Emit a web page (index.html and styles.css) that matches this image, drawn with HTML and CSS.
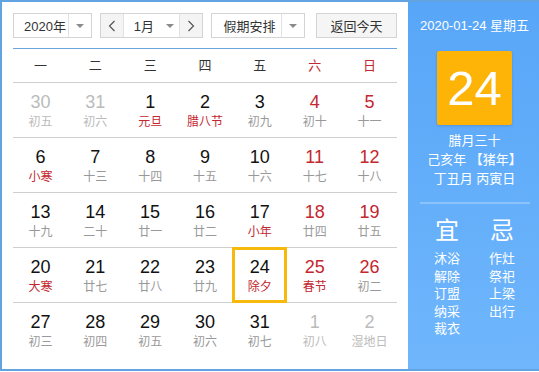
FILE: index.html
```html
<!DOCTYPE html>
<html lang="zh-CN">
<head>
  <meta charset="UTF-8">
  <title>万年历</title>
  <link rel="stylesheet" href="styles.css">
</head>
<body>
  <div class="calendar">
    <div class="main">
      <div class="toolbar">
        <div class="select year-select">
          <span class="select-text">2020年</span>
          <span class="select-arrow"><i class="caret"></i></span>
        </div>
        <div class="month-group">
          <span class="nav-btn">
            <svg width="8" height="12" viewBox="0 0 8 12"><polyline points="6.5,1 1.5,6 6.5,11" fill="none" stroke="#555" stroke-width="1.2"/></svg>
          </span>
          <span class="month-text">1月</span>
          <span class="month-arrow"><i class="caret"></i></span>
          <span class="nav-btn">
            <svg width="8" height="12" viewBox="0 0 8 12"><polyline points="1.5,1 6.5,6 1.5,11" fill="none" stroke="#555" stroke-width="1.2"/></svg>
          </span>
        </div>
        <div class="select holiday-select">
          <span class="select-text">假期安排</span>
          <span class="select-arrow"><i class="caret"></i></span>
        </div>
        <button class="today-btn">返回今天</button>
      </div>

      <div class="weekdays">
        <span>一</span><span>二</span><span>三</span><span>四</span><span>五</span>
        <span class="weekend">六</span><span class="weekend">日</span>
      </div>

      <div class="days">
        <div class="week">
          <div class="day other"><b>30</b><em>初五</em></div>
          <div class="day other"><b>31</b><em>初六</em></div>
          <div class="day"><b>1</b><em class="fest">元旦</em></div>
          <div class="day"><b>2</b><em class="fest">腊八节</em></div>
          <div class="day"><b>3</b><em>初九</em></div>
          <div class="day weekend"><b>4</b><em>初十</em></div>
          <div class="day weekend"><b>5</b><em>十一</em></div>
        </div>
        <div class="week">
          <div class="day"><b>6</b><em class="fest">小寒</em></div>
          <div class="day"><b>7</b><em>十三</em></div>
          <div class="day"><b>8</b><em>十四</em></div>
          <div class="day"><b>9</b><em>十五</em></div>
          <div class="day"><b>10</b><em>十六</em></div>
          <div class="day weekend"><b>11</b><em>十七</em></div>
          <div class="day weekend"><b>12</b><em>十八</em></div>
        </div>
        <div class="week">
          <div class="day"><b>13</b><em>十九</em></div>
          <div class="day"><b>14</b><em>二十</em></div>
          <div class="day"><b>15</b><em>廿一</em></div>
          <div class="day"><b>16</b><em>廿二</em></div>
          <div class="day"><b>17</b><em class="fest">小年</em></div>
          <div class="day weekend"><b>18</b><em>廿四</em></div>
          <div class="day weekend"><b>19</b><em>廿五</em></div>
        </div>
        <div class="week">
          <div class="day"><b>20</b><em class="fest">大寒</em></div>
          <div class="day"><b>21</b><em>廿七</em></div>
          <div class="day"><b>22</b><em>廿八</em></div>
          <div class="day"><b>23</b><em>廿九</em></div>
          <div class="day selected"><b>24</b><em class="fest">除夕</em></div>
          <div class="day weekend"><b>25</b><em class="fest">春节</em></div>
          <div class="day weekend"><b>26</b><em>初二</em></div>
        </div>
        <div class="week">
          <div class="day"><b>27</b><em>初三</em></div>
          <div class="day"><b>28</b><em>初四</em></div>
          <div class="day"><b>29</b><em>初五</em></div>
          <div class="day"><b>30</b><em>初六</em></div>
          <div class="day"><b>31</b><em>初七</em></div>
          <div class="day other"><b>1</b><em>初八</em></div>
          <div class="day other"><b>2</b><em>湿地日</em></div>
        </div>
      </div>
    </div>

    <div class="side">
      <div class="side-date">2020-01-24 星期五</div>
      <div class="big-day">24</div>
      <div class="lunar-info">
        <div>腊月三十</div>
        <div>己亥年 【猪年】</div>
        <div>丁丑月 丙寅日</div>
      </div>
      <div class="side-line"></div>
      <div class="almanac">
        <div class="almanac-col">
          <div class="almanac-title">宜</div>
          <div>沐浴</div>
          <div>解除</div>
          <div>订盟</div>
          <div>纳采</div>
          <div>裁衣</div>
        </div>
        <div class="almanac-col">
          <div class="almanac-title">忌</div>
          <div>作灶</div>
          <div>祭祀</div>
          <div>上梁</div>
          <div>出行</div>
        </div>
      </div>
    </div>
  </div>
</body>
</html>
```

FILE: styles.css
```css
body {
  margin: 0;
  padding: 0;
  font-family: "Liberation Sans", "Noto Sans CJK SC", sans-serif;
  background: #fff;
}

.calendar {
  display: flex;
  width: 539px;
  height: 367px;
  border: 2px solid #62a3e2;
  border-right: none;
}

/* left part */
.main {
  width: 384px;
  padding: 11px 11px 0 11px;
  background: #fff;
}

.toolbar {
  display: flex;
  height: 25px;
  font-size: 13px;
  color: #333;
}

.select, .month-group {
  display: flex;
  align-items: center;
  height: 23px;
  border: 1px solid #d4d4d4;
  background: #fff;
}

.year-select {
  width: 77px;
}

.select-text {
  flex: 1;
  padding-left: 10px;
}

.select-arrow {
  width: 22px;
  height: 23px;
  display: flex;
  align-items: center;
  justify-content: center;
  border-left: 1px solid #e2e2e2;
}

.caret {
  display: block;
  width: 0;
  height: 0;
  border-left: 4px solid transparent;
  border-right: 4px solid transparent;
  border-top: 4px solid #8a8a8a;
}

.month-group {
  width: 102px;
  margin-left: 8px;
}

.nav-btn {
  width: 22px;
  height: 23px;
  display: flex;
  align-items: center;
  justify-content: center;
  background: #f4f4f4;
}

.nav-btn:first-child {
  border-right: 1px solid #e2e2e2;
}

.nav-btn:last-child {
  border-left: 1px solid #e2e2e2;
}

.month-text {
  flex: 1;
  padding-left: 10px;
}

.month-arrow {
  width: 18px;
  display: flex;
  justify-content: center;
}

.holiday-select {
  width: 92px;
  margin-left: 8px;
}

.holiday-select .select-text {
  padding-left: 11px;
}

.today-btn {
  width: 81px;
  height: 25px;
  margin-left: 11px;
  border: 1px solid #d4d4d4;
  background: #f5f5f5;
  font-family: "Liberation Sans", "Noto Sans CJK SC", sans-serif;
  font-size: 13px;
  color: #333;
  padding: 0;
}

.weekdays {
  display: grid;
  grid-template-columns: repeat(7, 1fr);
  margin-top: 10px;
  height: 33px;
  line-height: 33px;
  border-top: 1px solid #6aa6dc;
  border-bottom: 1px solid #cfcfcf;
  text-align: center;
  font-size: 13px;
  color: #333;
}

.weekdays .weekend {
  color: #c3272f;
}

.week {
  display: grid;
  grid-template-columns: repeat(7, 1fr);
  height: 54px;
  border-bottom: 1px solid #cfcfcf;
}

.week:last-child {
  border-bottom: none;
}

.day {
  position: relative;
  display: flex;
  flex-direction: column;
  align-items: center;
  padding-top: 8px;
}

.day b {
  font-weight: normal;
  font-size: 18px;
  line-height: 22px;
  color: #111;
}

.day em {
  font-style: normal;
  font-size: 12px;
  line-height: 18px;
  color: #999;
}

.day.weekend b {
  color: #c3272f;
}

.day em.fest {
  color: #c3272f;
}

.day.other b,
.day.other em {
  color: #bbb;
}

.day.selected::after {
  content: "";
  position: absolute;
  top: -1px;
  left: 0;
  right: 0;
  bottom: -1px;
  border: 3px solid #f6b90c;
}

/* right part */
.side {
  flex: 1;
  display: flex;
  flex-direction: column;
  align-items: center;
  background: linear-gradient(to bottom, #58a6f8, #6fb6fc);
  color: #fff;
  font-family: "Liberation Sans", "Noto Sans CJK SC", sans-serif;
}

.side-date {
  margin-top: 15px;
  font-size: 13px;
  line-height: 18px;
}

.big-day {
  width: 75px;
  height: 74px;
  margin-top: 16px;
  background: #fdb407;
  border-radius: 2px;
  box-shadow: 0 1px 3px rgba(0, 0, 0, 0.15);
  font-size: 49px;
  line-height: 74px;
  text-align: center;
}

.lunar-info {
  margin-top: 6px;
  font-size: 13px;
  line-height: 19px;
  text-align: center;
}

.side-line {
  width: 110px;
  height: 2px;
  margin-top: 14px;
  background: #8cc3fb;
}

.almanac {
  display: flex;
  gap: 29px;
  margin-top: 13px;
  font-size: 13px;
  line-height: 17.5px;
}

.almanac-col {
  width: 26px;
}

.almanac-title {
  font-size: 24px;
  line-height: 28px;
  text-align: center;
  margin-bottom: 5px;
}
```
